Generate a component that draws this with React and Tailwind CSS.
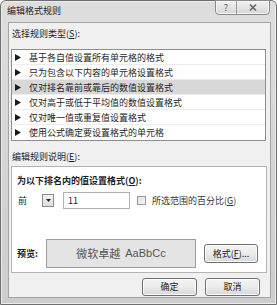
import React from 'react';

const rules = [
  '基于各自值设置所有单元格的格式',
  '只为包含以下内容的单元格设置格式',
  '仅对排名靠前或靠后的数值设置格式',
  '仅对高于或低于平均值的数值设置格式',
  '仅对唯一值或重复值设置格式',
  '使用公式确定要设置格式的单元格',
];

function Arrow() {
  return (
    <svg width="6" height="7" viewBox="0 0 6 7" className="shrink-0">
      <path d="M0 0 L6 3.5 L0 7 Z" fill="#1a1a1a" />
    </svg>
  );
}

function Button({ children, className = '' }) {
  return (
    <div
      className={
        'flex items-center justify-center rounded-[3px] border border-[#707070] bg-gradient-to-b from-[#f4f4f4] via-[#ebebeb] to-[#d8d8d8] text-[9px] text-[#222] shadow-[inset_0_0_0_1px_#fcfcfc] ' +
        className
      }
    >
      {children}
    </div>
  );
}

export default function App() {
  return (
    <div className="w-[277px] h-[305px] overflow-hidden bg-white font-['Noto_Sans_CJK_SC','Noto_Sans',sans-serif]">
      <div className="flex h-full flex-col rounded-t-[6px] border border-[#6e6e6e] bg-gradient-to-b from-[#dedede] to-[#cdcdcd] shadow-[inset_0_0_0_1px_#ececec]">
        {/* title bar */}
        <div className="flex h-[21px] shrink-0 items-start justify-between pl-[6px] pr-[6px]">
          <div className="pt-[4px] text-[9px] leading-[12px] text-[#1e1e1e]">编辑格式规则</div>
          <div className="flex -mt-px h-[15px] overflow-hidden rounded-b-[4px] border border-[#8a8a8a] bg-gradient-to-b from-[#f2f2f2] to-[#d6d6d6] shadow-[inset_0_0_0_1px_#f7f7f7]">
            <div className="flex w-[21px] items-center justify-center border-r border-[#9a9a9a] text-[9px] leading-none text-[#555]">?</div>
            <div className="flex w-[32px] items-center justify-center text-[9px] leading-none text-[#555]">
              <svg width="8" height="7" viewBox="0 0 8 7">
                <path d="M1 0.5 L7 6.5 M7 0.5 L1 6.5" stroke="#666" strokeWidth="1.6" />
              </svg>
            </div>
          </div>
        </div>

        {/* client area */}
        <div className="mb-[6px] ml-[7px] mr-[5px] flex flex-1 flex-col border border-[#a4a4a4] bg-[#f0f0f0] px-[2px] text-[9px] text-[#1e1e1e]">
          <div className="pl-[1px] pt-[5px] leading-[12px]">
            选择规则类型(<span className="underline">S</span>):
          </div>

          <div className="mt-[9px] mr-[2px] border border-[#8e8e8e] bg-white">
            {rules.map((r, i) => (
              <div
                key={i}
                className={
                  'flex h-[15px] items-center gap-[8px] pl-[3px] leading-none ' +
                  (i === 2 ? 'bg-[#d8d8d8] ' : '') +
                  (i < rules.length - 1 ? 'border-b border-[#ececec]' : '')
                }
              >
                <Arrow />
                <span>{r}</span>
              </div>
            ))}
          </div>

          <div className="mt-[10px] pl-[1px] leading-[12px]">
            编辑规则说明(<span className="underline">E</span>):
          </div>

          <div className="mt-[3px] mr-[1px] flex h-[107px] flex-col border border-[#b4b4b4] bg-white px-[5px]">
            <div className="pt-[8px] font-bold leading-[12px]">
              为以下排名内的值设置格式(<span className="underline">O</span>):
            </div>
            <div className="mt-[5px] flex items-center">
              <div className="flex h-[16px] w-[38px] items-center justify-between pl-[1px] pr-[1px]">
                <span>前</span>
                <div className="flex h-[13px] w-[12px] items-center justify-center border border-[#8a8a8a] bg-gradient-to-b from-[#f4f4f4] to-[#dcdcdc]">
                  <svg width="5" height="3" viewBox="0 0 5 3">
                    <path d="M0 0 H5 L2.5 3 Z" fill="#222" />
                  </svg>
                </div>
              </div>
              <div className="ml-[8px] flex h-[17px] w-[67px] items-center border border-[#b0b0b0] pl-[4px]">11</div>
              <div className="ml-[7px] h-[9px] w-[9px] border border-[#9a9a9a] bg-gradient-to-br from-[#e2e2e2] to-[#f6f6f6]" />
              <div className="ml-[6px] text-[#333]">
                所选范围的百分比(<span className="underline">G</span>)
              </div>
            </div>

            <div className="mt-auto mb-[4px] flex items-center">
              <div className="w-[29px] font-bold">预览:</div>
              <div className="flex h-[29px] w-[150px] items-center justify-center border border-[#9c9c9c] bg-[#e4e4e4] text-[11px] text-[#555] font-['Noto_Sans_CJK_SC','Liberation_Sans',sans-serif]">
                微软卓越&nbsp;&nbsp;<span className="font-['Liberation_Sans',sans-serif]">AaBbCc</span>
              </div>
              <Button className="ml-[8px] h-[19px] w-[54px]">
                格式(<span className="underline">F</span>)...
              </Button>
            </div>
          </div>

          <div className="mt-[5px] mr-[8px] flex justify-end gap-[8px]">
            <Button className="h-[18px] w-[55px]">确定</Button>
            <Button className="h-[18px] w-[55px]">取消</Button>
          </div>
        </div>
      </div>
    </div>
  );
}
